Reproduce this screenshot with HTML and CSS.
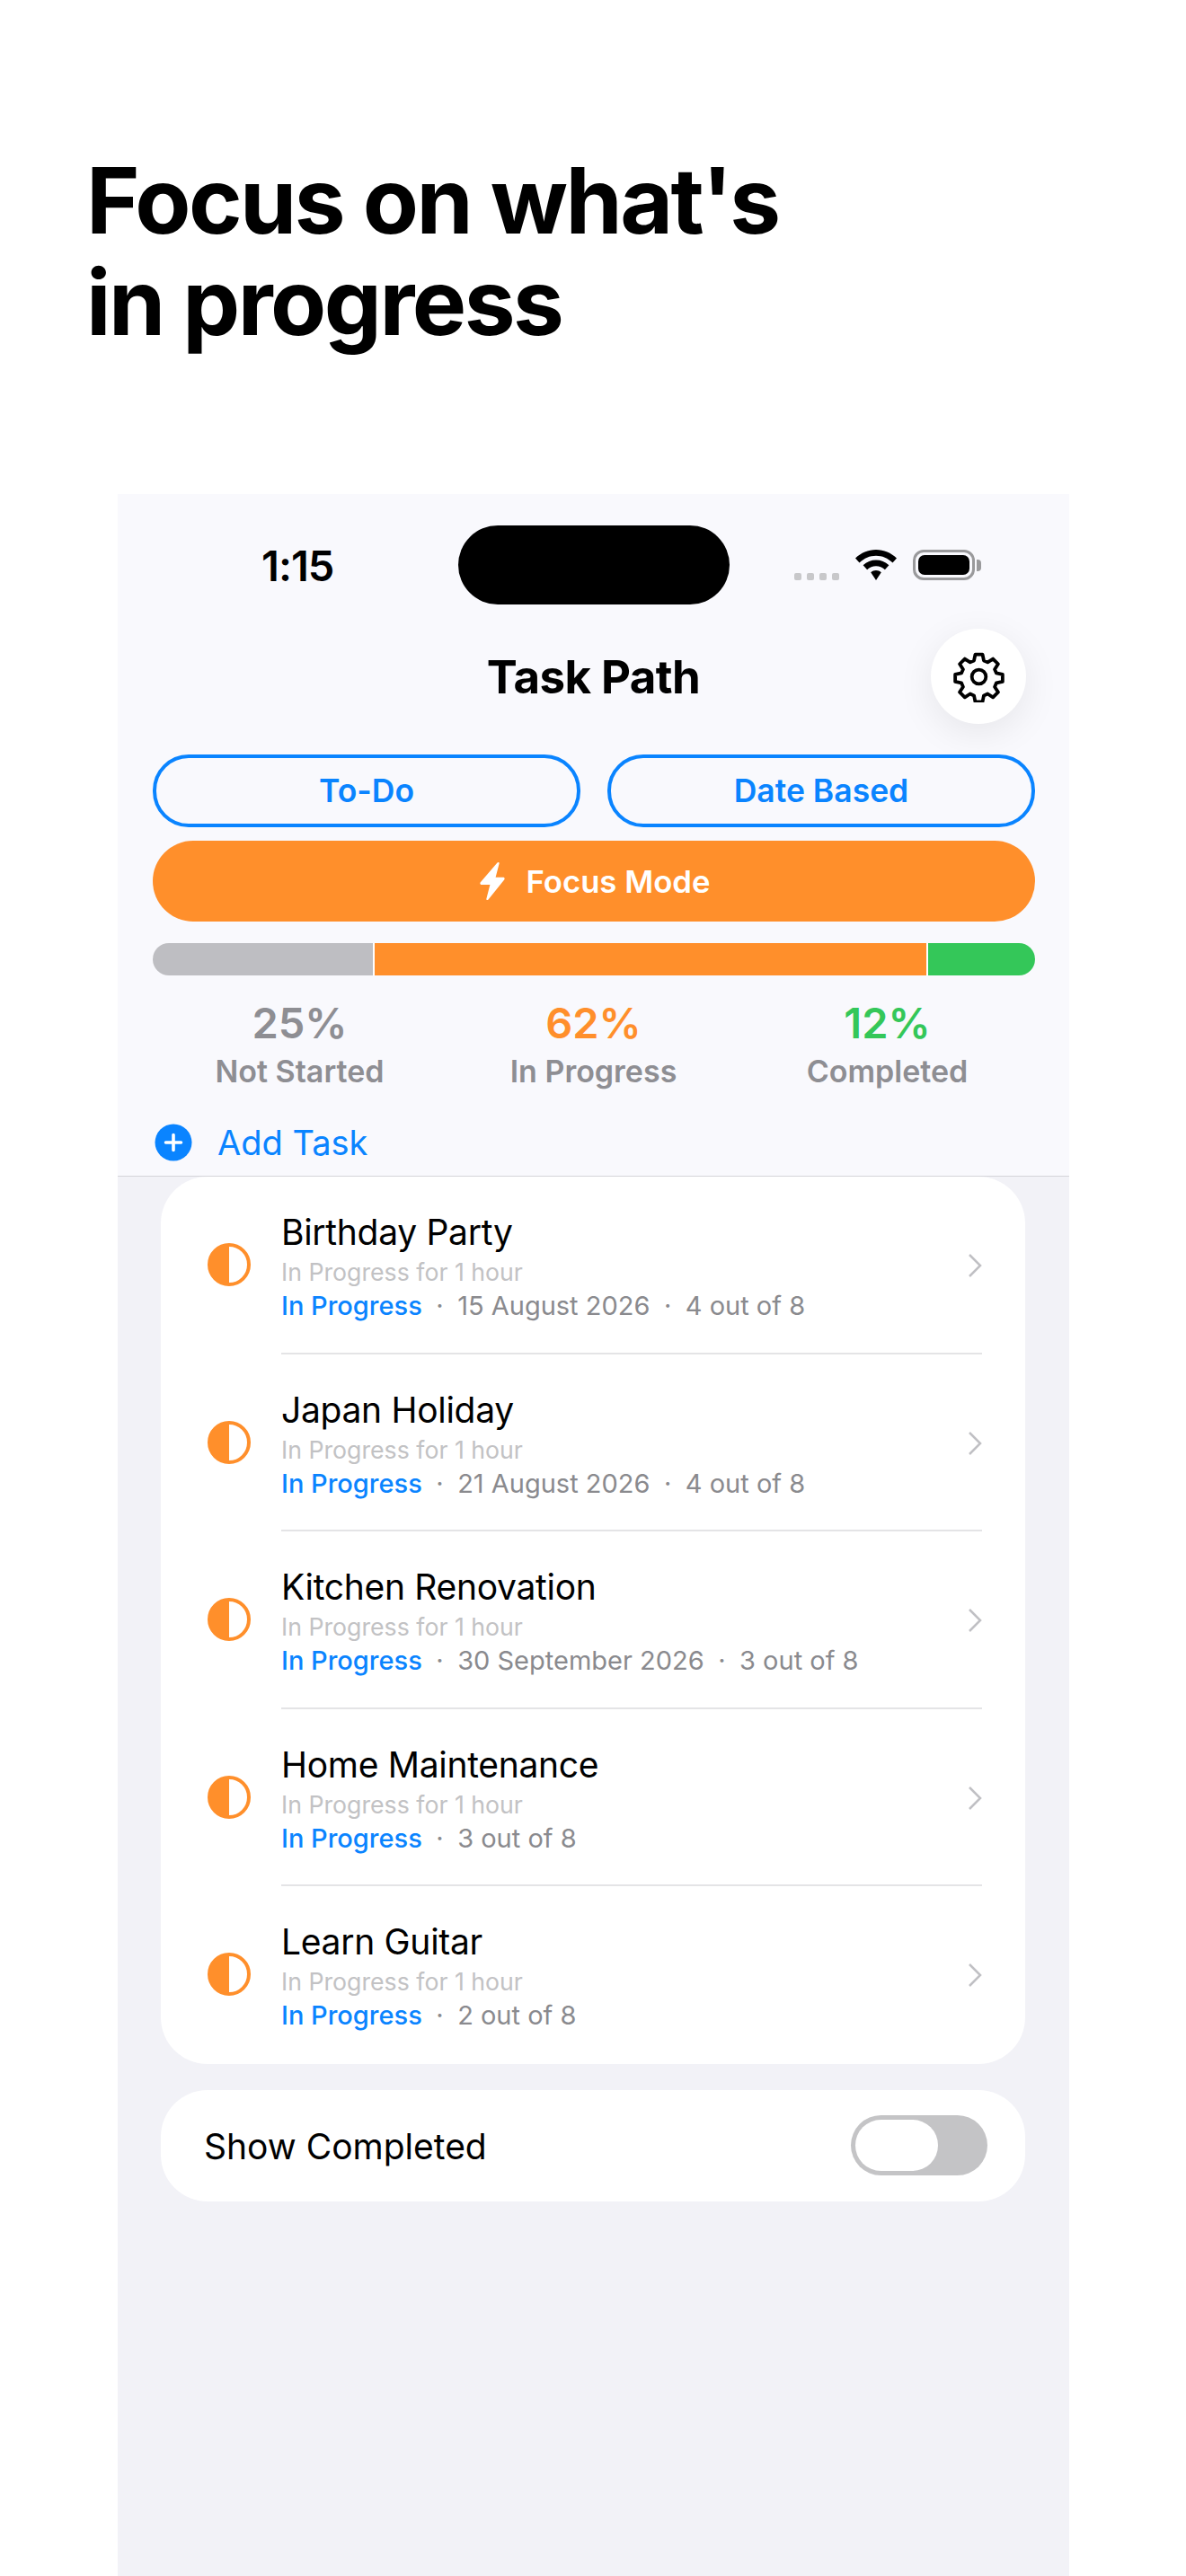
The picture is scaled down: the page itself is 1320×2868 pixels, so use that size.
FILE: index.html
```html
<!DOCTYPE html>
<html lang="en">
<head>
<meta charset="utf-8">
<title>Task Path</title>
<link rel="stylesheet" href="styles.css">
</head>
<body>
<main class="page">
  <h1 class="headline">Focus on what's<br>in progress</h1>
  <section class="phone">
    <header class="top">
      <div class="status">
        <span class="time">1:15</span>
        <span class="island"></span>
        <span class="indicators">
          <span class="dots"><i></i><i></i><i></i><i></i></span>
          <svg class="wifi" viewBox="0 0 46 34"><path d="M23 0C14 0 6.5 3.4 0 9.500L4.500 14.500C10 9.500 16 6.800 23 6.800S36 9.500 41.500 14.500L46 9.500C39.500 3.400 32 0 23 0Z"/><path d="M23 11.500C17.500 11.500 12.800 13.500 8.600 17.300L13.100 22.300C16 19.800 19.200 18.300 23 18.300S30 19.800 32.900 22.300L37.400 17.300C33.200 13.500 28.500 11.500 23 11.500Z"/><path d="M23 23C20.800 23 18.900 23.800 17.200 25.200L23 34L28.800 25.200C27.100 23.800 25.200 23 23 23Z"/></svg>
          <span class="battery"><span class="battery-fill"></span></span>
          <span class="battery-tip"></span>
        </span>
      </div>
      <div class="titlebar">
        <span></span>
        <h2 class="apptitle">Task Path</h2>
        <button class="gear" aria-label="Settings">
          <svg viewBox="0 0 24 24" class="gear-icon"><circle cx="12" cy="12" r="3.300"/><path d="M10.300 1.500h3.400l.6 2.900 1.800.8 2.500-1.600 2.400 2.400-1.600 2.500.8 1.800 2.900.6v3.400l-2.900.6-.8 1.800 1.600 2.500-2.400 2.400-2.500-1.600-1.800.8-.6 2.900h-3.400l-.6-2.900-1.800-.8-2.500 1.600-2.400-2.400 1.600-2.500-.8-1.800-2.900-.6v-3.400l2.900-.6.800-1.800-1.600-2.500 2.400-2.400 2.500 1.600 1.800-.8z" stroke-linejoin="round"/></svg>
        </button>
      </div>
      <div class="modes">
        <button class="mode">To-Do</button>
        <button class="mode">Date Based</button>
      </div>
      <button class="focus">
        <svg class="bolt" viewBox="0 0 28 44"><path d="M19.500 1.500C20.500 .3 22 1 21.600 2.600L17.600 17.800H26C27.500 17.800 28.200 19.300 27.200 20.500L9.500 42.500C8.500 43.700 7 43 7.400 41.400L11.400 26H2C.5 26-.2 24.500.8 23.300Z"/></svg>
        <span>Focus Mode</span>
      </button>
      <div class="bar">
        <span class="seg seg-grey"></span>
        <span class="seg seg-orange"></span>
        <span class="seg seg-green"></span>
      </div>
      <div class="stats">
        <div class="stat"><b class="pct grey">25%</b><span class="label">Not Started</span></div>
        <div class="stat"><b class="pct orange">62%</b><span class="label">In Progress</span></div>
        <div class="stat"><b class="pct green">12%</b><span class="label">Completed</span></div>
      </div>
      <div class="add">
        <svg class="add-icon" viewBox="0 0 42 42"><circle cx="21" cy="21" r="20.500" fill="#0a84ff"/><path d="M21 12.500v17M12.500 21h17" stroke="#fff" stroke-width="3.600" stroke-linecap="round"/></svg>
        <span>Add Task</span>
      </div>
    </header>
    <div class="content">
      <ul class="card tasks">
        <li class="task">
          <svg class="half" viewBox="0 0 48 48"><circle cx="24" cy="24" r="22" fill="none" stroke="#ff8f2b" stroke-width="4"/><path d="M24 2A22 22 0 0 0 24 46Z" fill="#ff8f2b"/></svg>
          <div class="task-body">
            <div class="task-name">Birthday Party</div>
            <div class="task-sub">In Progress for 1 hour</div>
            <div class="task-meta"><span class="state">In Progress</span><span class="sep">·</span><span>15 August 2026</span><span class="sep">·</span><span>4 out of 8</span></div>
          </div>
          <svg class="chev" viewBox="0 0 16 28"><path d="M2 2l12 12L2 26"/></svg>
        </li>
        <li class="task">
          <svg class="half" viewBox="0 0 48 48"><circle cx="24" cy="24" r="22" fill="none" stroke="#ff8f2b" stroke-width="4"/><path d="M24 2A22 22 0 0 0 24 46Z" fill="#ff8f2b"/></svg>
          <div class="task-body">
            <div class="task-name">Japan Holiday</div>
            <div class="task-sub">In Progress for 1 hour</div>
            <div class="task-meta"><span class="state">In Progress</span><span class="sep">·</span><span>21 August 2026</span><span class="sep">·</span><span>4 out of 8</span></div>
          </div>
          <svg class="chev" viewBox="0 0 16 28"><path d="M2 2l12 12L2 26"/></svg>
        </li>
        <li class="task">
          <svg class="half" viewBox="0 0 48 48"><circle cx="24" cy="24" r="22" fill="none" stroke="#ff8f2b" stroke-width="4"/><path d="M24 2A22 22 0 0 0 24 46Z" fill="#ff8f2b"/></svg>
          <div class="task-body">
            <div class="task-name">Kitchen Renovation</div>
            <div class="task-sub">In Progress for 1 hour</div>
            <div class="task-meta"><span class="state">In Progress</span><span class="sep">·</span><span>30 September 2026</span><span class="sep">·</span><span>3 out of 8</span></div>
          </div>
          <svg class="chev" viewBox="0 0 16 28"><path d="M2 2l12 12L2 26"/></svg>
        </li>
        <li class="task">
          <svg class="half" viewBox="0 0 48 48"><circle cx="24" cy="24" r="22" fill="none" stroke="#ff8f2b" stroke-width="4"/><path d="M24 2A22 22 0 0 0 24 46Z" fill="#ff8f2b"/></svg>
          <div class="task-body">
            <div class="task-name">Home Maintenance</div>
            <div class="task-sub">In Progress for 1 hour</div>
            <div class="task-meta"><span class="state">In Progress</span><span class="sep">·</span><span>3 out of 8</span></div>
          </div>
          <svg class="chev" viewBox="0 0 16 28"><path d="M2 2l12 12L2 26"/></svg>
        </li>
        <li class="task">
          <svg class="half" viewBox="0 0 48 48"><circle cx="24" cy="24" r="22" fill="none" stroke="#ff8f2b" stroke-width="4"/><path d="M24 2A22 22 0 0 0 24 46Z" fill="#ff8f2b"/></svg>
          <div class="task-body">
            <div class="task-name">Learn Guitar</div>
            <div class="task-sub">In Progress for 1 hour</div>
            <div class="task-meta"><span class="state">In Progress</span><span class="sep">·</span><span>2 out of 8</span></div>
          </div>
          <svg class="chev" viewBox="0 0 16 28"><path d="M2 2l12 12L2 26"/></svg>
        </li>
      </ul>
      <div class="card toggle-row">
        <span class="toggle-label">Show Completed</span>
        <span class="switch"><span class="knob"></span></span>
      </div>
    </div>
  </section>
</main>
</body>
</html>
```
FILE: styles.css
```css
* { box-sizing: border-box; }
html, body { margin: 0; padding: 0; background: #fff; }
body { font-family: Inter, "Liberation Sans", sans-serif; color: #000; }
button { font: inherit; border: 0; background: none; padding: 0; }
.page { width: 1320px; height: 2868px; overflow: hidden; padding-top: 167px; display: flex; flex-direction: column; }
.headline { margin: 0 0 0 96px; font-size: 101.500px; line-height: 113px; font-weight: 700; letter-spacing: -2.500px; height: 383px; }
.phone { margin-left: 131px; width: 1059px; flex: 1; background: #f2f2f7; display: flex; flex-direction: column; }
.top { background: #f9f9fd; height: 760px; border-bottom: 1px solid #d5d5da; padding-top: 35px; }
.status { display: grid; grid-template-columns: 1fr 302px 1fr; align-items: center; height: 88px; }
.time { justify-self: center; font-size: 47px; font-weight: 600; margin-left: 22px; letter-spacing: -1px; }
.island { background: #000; height: 88px; border-radius: 44px; }
.indicators { display: flex; align-items: flex-end; justify-self: end; height: 34px; margin-right: 98px; }
.dots { display: flex; gap: 6px; margin-right: 18px; }
.dots i { width: 8px; height: 8px; border-radius: 2px; background: #c8c8ca; }
.wifi { width: 46px; height: 34px; fill: #000; margin-right: 18px; }
.battery { width: 69px; height: 34px; border: 3px solid #9a9a9c; border-radius: 12px; padding: 3px; display: flex; }
.battery-fill { flex: 1; background: #000; border-radius: 7px; }
.battery-tip { width: 5px; height: 13px; background: #9a9a9c; border-radius: 0 4px 4px 0; margin: 0 0 10px 2px; }
.titlebar { display: grid; grid-template-columns: 1fr auto 1fr; align-items: center; height: 106px; margin-top: 27px; padding-right: 48px; padding-left: 48px; }
.apptitle { margin: 0; font-size: 51px; font-weight: 700; letter-spacing: -.6px; }
.gear { justify-self: end; width: 106px; height: 106px; border-radius: 50%; background: #fff; box-shadow: 0 10px 40px rgba(0,0,0,.08); display: flex; align-items: center; justify-content: center; }
.gear-icon { width: 57px; height: 57px; fill: none; stroke: #000; stroke-width: 1.600; }
.modes { display: grid; grid-template-columns: 1fr 1fr; gap: 30px; margin: 34px 38px 0 39px; }
.mode { height: 81px; border: 4px solid #0a84ff; border-radius: 40px; color: #0a84ff; font-size: 35.500px; font-weight: 600; }
.focus { display: flex; align-items: center; justify-content: center; gap: 24px; width: 982px; height: 90px; margin: 15px 0 0 39px; padding-left: 2px; background: #ff8f2b; border-radius: 45px; color: #fff; font-size: 34.700px; font-weight: 600; }
.bolt { width: 28px; height: 44px; fill: #fff; }
.bar { display: flex; gap: 2px; width: 982px; height: 36px; margin: 24px 0 0 39px; border-radius: 18px; overflow: hidden; background: #fff; }
.seg-grey { width: 245px; background: #bebec2; }
.seg-orange { width: 614px; background: #ff8f2b; }
.seg-green { flex: 1; background: #34c759; }
.stats { display: grid; grid-template-columns: repeat(3, 1fr); margin: 25px 39px 0; }
.stat { display: flex; flex-direction: column; align-items: center; }
.pct { font-size: 47px; line-height: 56px; font-weight: 600; }
.label { font-size: 34px; line-height: 44px; margin-top: 4px; font-weight: 600; color: #8e8e93; }
.grey { color: #8e8e93; }
.orange { color: #ff8f2b; }
.green { color: #34c759; }
.add { display: flex; align-items: center; gap: 28px; margin: 32px 0 0 41px; color: #0a84ff; font-size: 38px; height: 50px; }
.add-icon { width: 42px; height: 42px; }
.content { padding: 0 49px 0 48px; }
.card { background: #fff; border-radius: 52px; margin: 0; padding: 0; list-style: none; }
.task { display: flex; align-items: center; height: 197.500px; padding-left: 52px; padding-right: 48px; position: relative; }
.half { width: 48px; height: 48px; flex: none; margin-right: 34px; margin-top: -1px; }
.task-body { flex: 1; height: 100%; padding-top: 38px; border-bottom: 2px solid #e4e4e6; }
.task:last-child .task-body { border-bottom: 0; }
.task-name { font-size: 39px; line-height: 48px; letter-spacing: -.3px; }
.task-sub { font-size: 26.700px; line-height: 34px; margin-top: 3px; color: #c2c2c4; }
.task-meta { display: flex; font-size: 29px; line-height: 34px; margin-top: 4px; color: #8a8a8e; }
.state { color: #0a84ff; font-weight: 500; }
.sep { margin: 0 15.500px; }
.chev { position: absolute; right: 48px; top: 85px; width: 16px; height: 28px; fill: none; stroke: #c0c0c4; stroke-width: 2.500; }
.toggle-row { display: flex; align-items: center; justify-content: space-between; height: 124px; margin-top: 29px; padding: 0 42px 0 48px; font-size: 39px; }
.toggle-label { padding-top: 2px; }
.switch { width: 152px; height: 67px; border-radius: 34px; background: #c4c4c6; padding: 5px; display: flex; }
.knob { width: 92px; height: 57px; border-radius: 29px; background: #fff; }
```
